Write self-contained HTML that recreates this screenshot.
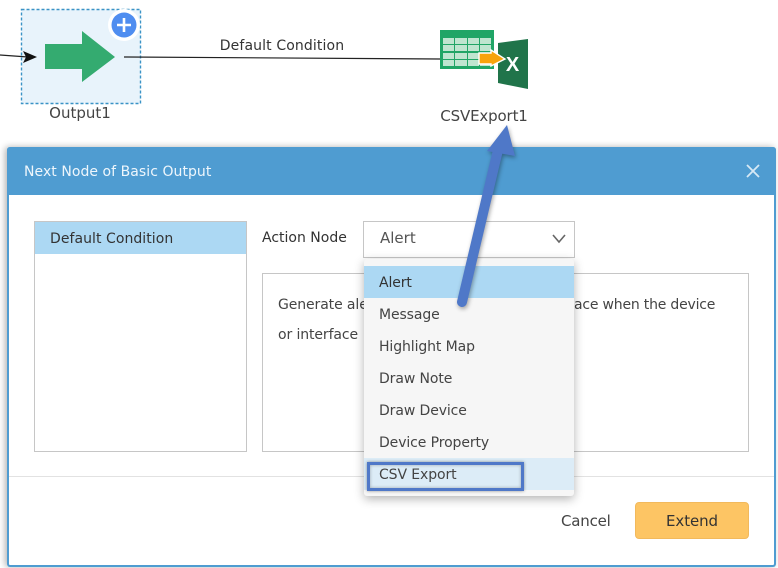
<!DOCTYPE html>
<html><head><meta charset="utf-8">
<style>
html,body{margin:0;padding:0;background:#fff}
#p{position:relative;width:778px;height:568px;overflow:hidden;background:#fff;font-family:"DejaVu Sans",sans-serif;color:#444;font-size:14px}
.a{position:absolute;white-space:nowrap}
.it{position:absolute;left:364px;width:210px;height:32px;line-height:35px;text-indent:15px;color:#444;font-size:14px;letter-spacing:-.1px}
</style></head><body><div id="p">
<svg class="a" style="left:0;top:0" width="778" height="148" viewBox="0 0 778 148">
<rect x="21.5" y="9.5" width="119" height="94" fill="#e8f3fb" stroke="#3a93c6" stroke-width="1.4" stroke-dasharray="3 2"/>
<path d="M0 55L28 57" stroke="#222" stroke-width="1.2"/>
<path d="M37 57L23 51L26 57L23 63Z" fill="#111"/>
<path d="M45 44H82V31L115 57L82 82V69H45Z" fill="#34ab70"/>
<circle cx="124" cy="25" r="16" fill="#fff"/><circle cx="124" cy="25" r="12.5" fill="#4f8df0"/>
<path d="M124 18V32M117 25H131" stroke="#fff" stroke-width="2.6"/>
<path d="M124 57L440 59" stroke="#222" stroke-width="1.2"/>
<rect x="440" y="30" width="54" height="39" fill="#20a566"/>
<g fill="#bfe5d0"><rect x="443" y="38" width="11" height="6"/><rect x="455" y="38" width="12" height="6"/><rect x="468" y="38" width="11" height="6"/><rect x="480" y="38" width="11" height="6"/><rect x="443" y="45" width="11" height="6"/><rect x="455" y="45" width="12" height="6"/><rect x="468" y="45" width="11" height="6"/><rect x="480" y="45" width="11" height="6"/><rect x="443" y="53" width="11" height="6"/><rect x="455" y="53" width="12" height="6"/><rect x="468" y="53" width="11" height="6"/><rect x="480" y="53" width="11" height="6"/><rect x="443" y="60" width="11" height="6"/><rect x="455" y="60" width="12" height="6"/><rect x="468" y="60" width="11" height="6"/><rect x="480" y="60" width="11" height="6"/></g>
<path d="M498 43L528 39V89L498 83Z" fill="#20744a"/>
<path d="M479 53H491V50L505 59L491 66V64H479Z" fill="#f7a30c" stroke="#fff" stroke-width="1.4"/>
<text x="512.500" y="71" text-anchor="middle" font-family="Liberation Sans,sans-serif" font-weight="700" font-size="20" fill="#fff">X</text>
<text x="282" y="50" text-anchor="middle" font-family="DejaVu Sans,sans-serif" font-size="14" letter-spacing=".12" fill="#333">Default Condition</text>
<text x="80" y="118" text-anchor="middle" font-family="DejaVu Sans,sans-serif" font-size="15" fill="#444">Output1</text>
<text x="484" y="121" text-anchor="middle" font-family="DejaVu Sans,sans-serif" font-size="15" letter-spacing="-.15" fill="#444">CSVExport1</text>
</svg>

<div class="a" style="left:7px;top:147px;width:765px;height:418px;border:2px solid #4f9cd1;border-top:0;border-radius:3px;background:#fff;box-shadow:-2px 0 7px rgba(0,0,0,.3)"></div>
<div class="a" style="left:7px;top:147px;width:769px;height:48px;background:#4f9cd1;border-radius:3px 3px 0 0"></div>
<div class="a" style="left:24px;top:162px;color:#eef6fc;font-size:14px;letter-spacing:.05px;line-height:20px">Next Node of Basic Output</div>
<svg class="a" style="left:746px;top:164px" width="14" height="14"><path d="M1 1L13 13M13 1L1 13" stroke="#d7e9f5" stroke-width="1.8"/></svg>

<div class="a" style="left:34px;top:221px;width:211px;height:229px;border:1px solid #c6c6c6"></div>
<div class="a" style="left:35px;top:222px;width:211px;height:32px;background:#acd8f3;line-height:34px;text-indent:15px;color:#333;font-size:14px;letter-spacing:.05px">Default Condition</div>
<div class="a" style="left:262px;top:228px;line-height:20px;color:#333;font-size:14px">Action Node</div>
<div class="a" style="left:363px;top:221px;width:210px;height:35px;border:1px solid #c6c6c6;line-height:33px;text-indent:16px;font-size:15px;color:#555">Alert</div>
<svg class="a" style="left:552px;top:234px" width="14" height="10"><path d="M1 1L7 8L13 1" fill="none" stroke="#666" stroke-width="1.6"/></svg>

<div class="a" style="left:262px;top:273px;width:485px;height:177px;border:1px solid #c6c6c6"></div>
<div class="a" style="left:278px;top:295px;line-height:20px;letter-spacing:-.1px;color:#444">Generate ale</div>
<div class="a" style="left:574px;top:295px;line-height:20px;letter-spacing:-.2px;color:#444">ace when the device</div>
<div class="a" style="left:278px;top:325px;line-height:20px;letter-spacing:-.1px;color:#444">or interface</div>

<div class="a" style="left:9px;top:476px;width:765px;height:1px;background:#e2e2e2"></div>

<div class="a" style="left:364px;top:259px;width:210px;height:237px;background:#f6f6f6;border-radius:3px;box-shadow:0 3px 10px rgba(0,0,0,.3)"></div>
<div class="it" style="top:266px;background:#acd8f3;color:#333">Alert</div>
<div class="it" style="top:298px">Message</div>
<div class="it" style="top:330px">Highlight Map</div>
<div class="it" style="top:362px">Draw Note</div>
<div class="it" style="top:394px">Draw Device</div>
<div class="it" style="top:426px">Device Property</div>
<div class="it" style="top:458px;background:#dcecf7">CSV Export</div>
<div class="a" style="left:367px;top:462px;width:151px;height:23px;border:3px solid #4f78c8;box-shadow:0 0 3px rgba(0,0,0,.4),inset 0 0 3px rgba(0,0,0,.3)"></div>

<div class="a" style="left:561px;top:511px;line-height:20px;font-size:15px;letter-spacing:-.2px;color:#444">Cancel</div>
<div class="a" style="left:635px;top:502px;width:112px;height:35px;border:1px solid #f2b95c;border-radius:4px;background:#fdc564;text-align:center;line-height:36px;font-size:15px;letter-spacing:-.1px;color:#333">Extend</div>

<svg class="a" style="left:440px;top:115px;filter:drop-shadow(1px 2px 2px rgba(0,0,0,.35))" width="90" height="200">
<path d="M22 187L58 35" stroke="#4f78c8" stroke-width="10" stroke-linecap="round" fill="none"/>
<path d="M67 10L47 36L75 41Z" fill="#4f78c8"/>
</svg>
</div></body></html>
